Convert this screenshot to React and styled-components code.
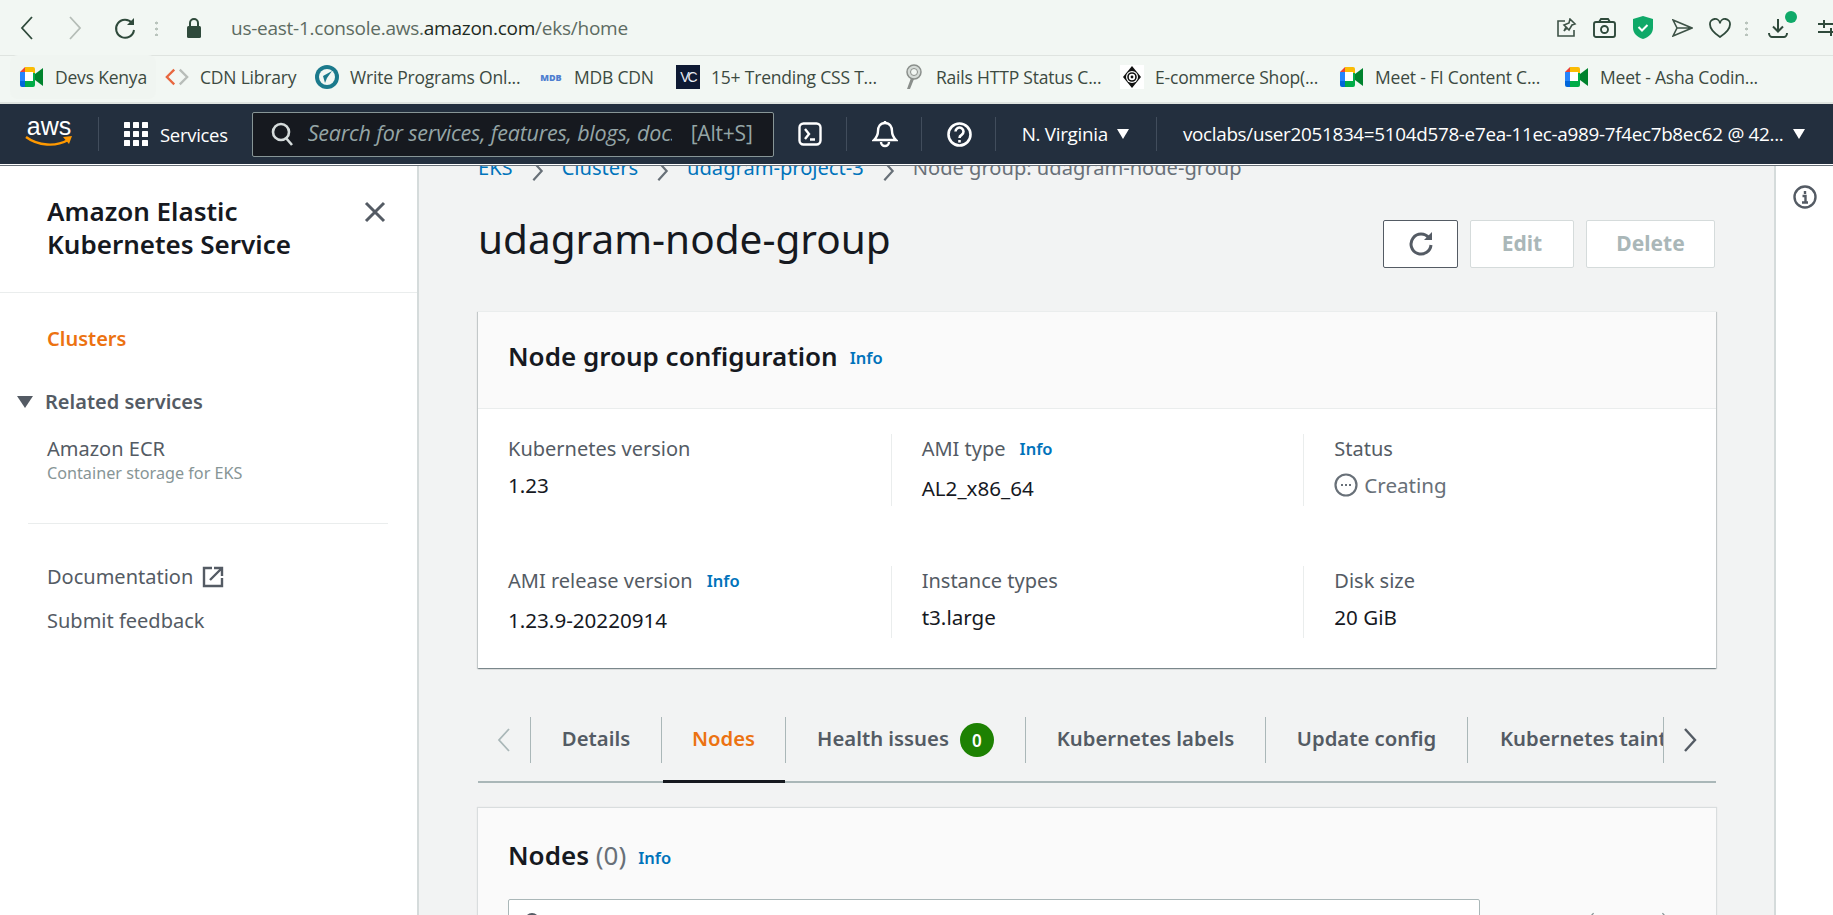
import React from 'react';
import styled, { createGlobalStyle } from 'styled-components';

const Global = createGlobalStyle`
  html, body { margin: 0; padding: 0; height: 100%; overflow: hidden; background: #fff; }
  * { box-sizing: border-box; }
  body { font-family: "Noto Sans", "Open Sans", Arial, sans-serif; }
`;

const Page = styled.div`
  width: 1833px; height: 915px; overflow: hidden; display: flex; flex-direction: column;
`;

/* browser chrome */
const AddressBar = styled.div`
  height: 56px; background: #f2f7f3; border-bottom: 1px solid #dfe4e0;
  display: flex; align-items: center; position: relative; padding-left: 15px; flex: none; overflow: hidden;
`;
const ChromeBtn = styled.span`
  display: inline-flex; align-items: center; justify-content: ${p => p.$start ? 'flex-start' : 'center'}; width: ${p => p.$w || 24}px;
  margin-left: ${p => p.$ml || 0}px; color: ${p => p.$c || '#2f4a3b'}; flex: none; position: relative;
`;
const Url = styled.div`
  font-family: "Open Sans", sans-serif; font-size: 19px; margin-left: 25px; color: #5d6b62; white-space: nowrap; letter-spacing: -.25px;
  b { font-weight: 400; color: #1d2a22; }
`;
const Spacer = styled.div` flex: 1; `;
const Dot3 = styled.span`
  width: 3px; height: 16px; margin-left: ${p => p.$ml}px; flex: none;
  background: radial-gradient(circle, #b9c4bc 1.4px, transparent 1.6px) 0 0 / 3px 6px;
`;
const GreenDot = styled.span`
  position: absolute; width: 12px; height: 12px; border-radius: 50%; background: #0fa968; top: -7px; right: -7px;
`;
const Bookmarks = styled.div`
  height: 48px; background: #f2f7f3; border-bottom: 2px solid #dfe4e0; display: flex; align-items: center; flex: none; padding: 0 0 4px 20px;
`;
const Bookmark = styled.div`
  width: ${p => p.$w}px; flex: none; display: flex; align-items: center; gap: 11px; position: relative;
  font-family: "Open Sans", sans-serif; font-size: 17.5px; color: #3c4a41; white-space: nowrap; letter-spacing: -.2px;
  ${p => p.$hover && `&::before { content: ""; position: absolute; left: -10px; top: -10px; bottom: -10px; width: 146px; background: #f0f5f1; border-radius: 8px; z-index: 0; }
  & > * { position: relative; }`}
`;
const BookmarkText = styled.span` position: relative; `;
const FavSlot = styled.span`
  width: 24px; height: 24px; flex: none; display: inline-flex; align-items: center; justify-content: center;
`;
const MdbText = styled.span` font-size: 9px; font-weight: 800; color: #4f7fd0; letter-spacing: 0; `;
const VcBox = styled.span`
  width: 24px; height: 24px; background: #0e1a33; color: #e8edf5; font-size: 14px; display: flex; align-items: center; justify-content: center; letter-spacing: -2px; font-family: "Liberation Sans", sans-serif;
`;

/* AWS nav */
const Nav = styled.div`
  height: 60px; background: #232f3e; display: flex; align-items: center; flex: none; color: #fff; position: relative;
`;
const NavLine = styled.div` height: 2px; flex: none; background: linear-gradient(#fff 0 1px, #687078 1px); `;
const AwsLogo = styled.div`
  width: 48px; margin-left: 25px; flex: none; display: flex; flex-direction: column; align-items: center; line-height: 1;
  span { font-family: "Liberation Sans", sans-serif; font-size: 25px; font-weight: 400; height: 18px; line-height: 18px; margin-top: -5px; letter-spacing: 0; }
`;
const NavDiv = styled.span`
  width: 1px; height: 34px; background: #414d5c; flex: none; margin-left: ${p => p.$ml}px;
`;
const NavIcon = styled.span` display: inline-flex; flex: none; margin-left: ${p => p.$ml}px; `;
const NavText = styled.span`
  font-size: ${p => p.$s || 18.85}px; color: #fff; margin-left: ${p => p.$ml || 0}px; white-space: nowrap; flex: none;
  font-family: "Open Sans", sans-serif; letter-spacing: -.3px;
`;
const SearchBox = styled.div`
  width: 522px; height: 45px; margin-left: 24px; background: #16191f; border: 1px solid #879596; border-radius: 2px;
  display: flex; align-items: center; padding-left: 18px; flex: none;
`;
const SearchText = styled.span`
  font-family: "Open Sans", sans-serif; font-style: italic; font-size: 21.5px; line-height: 26px; margin-top: -2px; color: #95a5a6; margin-left: 14px; width: 364px; overflow: hidden; white-space: nowrap; flex: none; letter-spacing: -.2px;
`;
const Kbd = styled.span`
  font-family: "Open Sans", sans-serif; font-size: 21px; margin-top: -2px; color: #95a5a6; margin-left: 19px; white-space: nowrap; letter-spacing: -.2px;
`;
const Caret = styled.span`
  width: 0; height: 0; border-left: 6px solid transparent; border-right: 6px solid transparent; border-top: 10px solid #fff;
  margin-left: ${p => p.$ml}px; flex: none;
`;

/* app body */
const Body = styled.div` flex: 1; min-height: 0; display: flex; `;
const Sidebar = styled.aside`
  width: 419px; flex: none; background: #fff; border-right: 2px solid #d5dbdb; position: relative; color: #545b64;
`;
const SideHead = styled.div`
  height: 127px; padding: 29px 0 0 47px; border-bottom: 1px solid #eaeded;
  color: #16191f; font-size: 26px; font-weight: 600; line-height: 33px;
`;
const CloseBtn = styled.span`
  position: absolute; left: 364px; top: 35px; color: #545b64; display: flex;
`;
const SideLink = styled.div`
  margin-left: 47px; font-size: 20px; line-height: 26px; margin-top: ${p => p.$mt || 0}px;
  font-weight: ${p => p.$w || 400}; color: ${p => p.$c || '#545b64'}; display: flex; align-items: center; gap: 9px;
`;
const SideSection = styled.div`
  margin: 37px 0 0 17px; display: flex; align-items: center; gap: 12px; font-size: 20px; font-weight: 600; color: #545b64; line-height: 26px;
`;
const Tri = styled.span`
  width: 0; height: 0; border-left: 8px solid transparent; border-right: 8px solid transparent; border-top: 12px solid #545b64;
`;
const SideSmall = styled.div` margin: 0 0 0 47px; font-size: 16.2px; line-height: 22px; color: #879596; `;
const SideDivider = styled.div` margin: 39px 29px 0 28px; height: 1px; background: #eaeded; `;

const Main = styled.main`
  flex: 1; min-width: 0; background: #f2f3f3; padding: 0 58px 0 59px; overflow: hidden;
`;
const Crumbs = styled.div`
  margin-top: -11px; height: 24px; display: flex; align-items: center; font-size: 20.1px; color: #0073bb; white-space: nowrap;
`;
const CrumbSep = styled.span` display: inline-flex; margin: 8px 18px 0; color: #687078; `;
const CrumbLast = styled.span` color: #687078; `;
const TitleRow = styled.div`
  margin-top: 41px; height: 48px; display: flex; align-items: center; justify-content: space-between;
`;
const H1 = styled.h1` margin: -11px 0 0; font-size: 40.5px; font-weight: 400; color: #16191f; `;
const Actions = styled.div` display: flex; gap: 12px; margin-right: 1px; `;
const Btn = styled.div`
  width: ${p => p.$w}px; height: 48px; padding-bottom: 2px; border-radius: 2px; background: #fff; display: flex; align-items: center; justify-content: center;
  border: 1px solid ${p => p.$on ? '#545b64' : '#d5dbdb'}; color: ${p => p.$on ? '#545b64' : '#aab7b8'}; font-size: 21px; font-weight: 700;
`;
const Card = styled.section`
  margin-top: 43px; background: #fff; box-shadow: 0 1px 1px 0 rgba(0,28,36,.3), 1px 1px 1px 0 rgba(0,28,36,.15), -1px 1px 1px 0 rgba(0,28,36,.15);
  border-top: 1px solid #eaeded;
`;
const CardHead = styled.div`
  height: 97px; padding: 0 0 9px 30px; border-bottom: 1px solid #eaeded; display: flex; align-items: center; gap: 12px; background: #fafafa;
`;
const H2 = styled.h2` margin: 0; font-size: 26px; font-weight: 600; color: #16191f; `;
const Info = styled.a` font-size: 16.5px; font-weight: 600; color: #0073bb; margin-top: ${p => p.$mt || 0}px; `;
const Grid = styled.div`
  display: grid; grid-template-columns: repeat(3, 1fr); row-gap: 60px; padding: 25px 0 30px;
`;
const Cell = styled.div`
  height: 72px; padding: 3px 0 0 30px; border-left: ${p => p.$first ? '0' : '1px solid #eaeded'};
`;
const Label = styled.div` font-size: 20px; line-height: 24px; color: #545b64; display: flex; align-items: center; gap: 14px; `;
const Value = styled.div` font-size: 20.6px; line-height: 24px; color: #16191f; margin-top: ${p => p.$mt}px; display: flex; align-items: center; gap: 6px; `;
const Status = styled(Value)` color: #687078; `;

const Tabs = styled.div`
  margin-top: 49px; height: 66px; display: flex; border-bottom: 2px solid #aab7b8; position: relative;
`;
const TabArrow = styled.div`
  width: ${p => p.$w}px; height: 46px; flex: none; display: flex; align-items: center; justify-content: center; color: ${p => p.$c};
`;
const Tab = styled.div`
  width: ${p => p.$w}px; height: 66px; flex: none; position: relative;
  ${p => p.$active && '&::after { content: ""; position: absolute; left: 2px; right: 0; bottom: 0; height: 3px; background: #16191f; }'}
`;
const TabLabel = styled.div`
  height: 46px; padding-bottom: 4px; border-left: 1px solid #aab7b8; border-right: ${p => p.$end ? '1px solid #aab7b8' : '0'};
  display: flex; align-items: center; justify-content: ${p => p.$left ? 'flex-start' : 'center'}; gap: 11px; padding-left: ${p => p.$left ? '32px' : '0'};
  font-size: 20.3px; font-weight: 600; color: ${p => p.$active ? '#ec7211' : '#545b64'}; white-space: nowrap; overflow: hidden;
`;
const Badge = styled.span`
  width: 34px; height: 34px; margin-top: 4px; border-radius: 50%; background: #1d8102; color: #fff; font-size: 17px; font-weight: 600; display: flex; align-items: center; justify-content: center; flex: none;
`;
const NodesCard = styled.section`
  margin-top: 25px; height: 200px; background: #fafafa; padding: 32px 0 0 30px; position: relative;
  box-shadow: 0 0 1px 1px rgba(0,28,36,.1);
`;
const NodesHead = styled.div` display: flex; align-items: center; gap: 12px; height: 30px; `;
const Count = styled.span` font-weight: 400; color: #687078; `;
const SearchRow = styled.div` display: flex; margin-top: 29px; align-items: flex-start; `;
const Input = styled.div`
  width: 972px; height: 40px; background: #fff; border: 1px solid #aab7b8; border-radius: 2px; padding: 12px 0 0 15px; flex: none;
  display: flex; align-items: flex-start; gap: 10px; font-style: italic; font-size: 17px; line-height: 18px; color: #879596;
`;
const Pager = styled.div`
  margin-left: 105px; margin-top: 13px; display: flex; gap: 28px; align-items: flex-start; color: #879596; font-size: 17px; line-height: 20px;
`;
const Rail = styled.aside`
  width: 59px; flex: none; background: #fff; border-left: 2px solid #d5dbdb; display: flex; justify-content: center; padding-top: 19px; color: #545b64;
`;

/* drawings */
const Chev = ({ dir = 'l', w = 14, h = 24, c = 'currentColor', sw = 1.8 }) => (
  <svg width={w} height={h} viewBox="0 0 14 24" fill="none" stroke={c} strokeWidth={sw}>
    <path d={dir === 'l' ? 'M12 1 2 12l10 11' : 'M2 1l10 11L2 23'} />
  </svg>
);
const Meet = () => (
  <svg width="24" height="20" viewBox="0 0 24 20">
    <path d="M0 5 5 0v5z" fill="#ea4335" /><path d="M5 0h8a2 2 0 0 1 2 2v4H5z" fill="#fbbc04" />
    <path d="M0 5h5v9H0z" fill="#2684fc" /><path d="M0 14h5v6H2a2 2 0 0 1-2-2z" fill="#0066da" />
    <path d="M5 14h10v4a2 2 0 0 1-2 2H5z" fill="#00ac47" /><rect x="5" y="5" width="8" height="9" fill="#fff" />
    <path d="M13 6h2v8h-2z" fill="#00ac47" /><path d="M15 7l8-6v18l-8-6z" fill="#00832d" />
  </svg>
);
const Cdn = () => (
  <svg width="26" height="20" viewBox="0 0 26 20" fill="none" strokeWidth="2.5">
    <path d="M10 2 2 10l8 8" stroke="#e8673f" /><path d="M16 2l8 8-8 8" stroke="#b8bdb9" />
  </svg>
);
const Wp = () => (
  <svg width="24" height="24" viewBox="0 0 24 24">
    <circle cx="12" cy="12" r="12" fill="#1b7a8c" /><circle cx="12" cy="12" r="8" fill="#f2f7f3" />
    <path d="M17 6 8 11l2 7 2-5z" fill="#1b7a8c" />
  </svg>
);
const RailsPin = () => (
  <svg width="20" height="26" viewBox="0 0 20 26">
    <circle cx="11" cy="8" r="7" fill="#d5dbd7" stroke="#8a8f8b" strokeWidth="1.5" />
    <circle cx="11" cy="8" r="3.5" fill="#f2f7f3" stroke="#8a8f8b" />
    <path d="M8 14 4 25l3 0 4-10z" fill="#8a8f8b" />
  </svg>
);
const Ecom = () => (
  <svg width="24" height="24" viewBox="0 0 24 24">
    <rect width="24" height="24" fill="#fff" />
    <path d="M12 1 21 12 12 23 3 12z" fill="#111" /><circle cx="12" cy="12" r="6" fill="#fff" />
    <circle cx="12" cy="12" r="4" fill="none" stroke="#111" strokeWidth="1.6" /><circle cx="12" cy="12" r="1.4" fill="#111" />
  </svg>
);
const Services9 = () => (
  <svg width="24" height="24" viewBox="0 0 24 24" fill="#fff">
    {[0, 9, 18].flatMap(y => [0, 9, 18].map(x => <rect key={x + '-' + y} x={x} y={y} width="6" height="6" rx=".6" />))}
  </svg>
);
const Refresh = ({ s = 26, sw = 3 }) => (
  <svg width={s} height={s} viewBox="0 0 26 26" fill="none" stroke="currentColor" strokeWidth={sw}>
    <path d="M21 8a10 10 0 1 0 2 7" /><path d="M24 2v8h-8z" fill="currentColor" stroke="none" />
  </svg>
);

const bookmarks = [
  [145, <Meet />, 'Devs Kenya', true], [150, <Cdn />, 'CDN Library'], [224, <Wp />, 'Write Programs Onl...'],
  [137, <MdbText>MDB</MdbText>, 'MDB CDN'], [225, <VcBox>VC</VcBox>, '15+ Trending CSS T...'],
  [219, <RailsPin />, 'Rails HTTP Status C...'], [220, <Ecom />, 'E-commerce Shop(...'],
  [225, <Meet />, 'Meet - FI Content C...'], [210, <Meet />, 'Meet - Asha Codin...'],
];

const cells = [
  ['Kubernetes version', false, '1.23', 12],
  ['AMI type', true, 'AL2_x86_64', 15],
  ['Status', false, 'Creating', 12, true],
  ['AMI release version', true, '1.23.9-20220914', 15],
  ['Instance types', false, 't3.large', 12],
  ['Disk size', false, '20 GiB', 12],
];

export default function App() {
  return (
    <Page>
      <Global />
      <AddressBar>
        <ChromeBtn><Chev /></ChromeBtn>
        <ChromeBtn $ml={24} $c="#b5bdb7"><Chev dir="r" /></ChromeBtn>
        <ChromeBtn $ml={26}>
          <svg width="24" height="24" viewBox="0 0 24 24" fill="none" stroke="currentColor" strokeWidth="2"><path d="M19 7a9 9 0 1 0 2 7" /><path d="M21 2v7h-7z" fill="currentColor" stroke="none" /></svg>
        </ChromeBtn>
        <Dot3 $ml={18} />
        <ChromeBtn $ml={24}>
          <svg width="18" height="22" viewBox="0 0 18 22" fill="#2f4a3b"><rect x="2" y="9" width="14" height="12" rx="1.5" /><path d="M5 9V6a4 4 0 0 1 8 0v3" fill="none" stroke="#2f4a3b" strokeWidth="2" /></svg>
        </ChromeBtn>
        <Url>us-east-1.console.aws.<b>amazon.com</b>/eks/home</Url>
        <Spacer />
        <ChromeBtn $c="#3e5347">
          <svg width="20" height="20" viewBox="0 0 20 20" fill="none" stroke="currentColor" strokeWidth="1.6"><path d="M8 3H1v15h16v-6" /><path d="M13 1l5 5-3 1-3 5-2-2-3 3 2-4-2-2 5-2z" /></svg>
        </ChromeBtn>
        <ChromeBtn $ml={13} $c="#2f4a3b">
          <svg width="23" height="20" viewBox="0 0 23 20" fill="none" stroke="currentColor" strokeWidth="1.9"><rect x="1" y="4" width="21" height="15" rx="2" /><path d="M6 4l2-3h7l2 3" /><circle cx="11.500" cy="11.500" r="3.500" /></svg>
        </ChromeBtn>
        <ChromeBtn $ml={15} $c="#0fa968">
          <svg width="20" height="23" viewBox="0 0 20 23"><path d="M10 0 20 3v9c0 5-4 9-10 11C4 21 0 17 0 12V3z" fill="#0fa968" /><path d="M5.500 11 9 14.500 14.500 9" fill="none" stroke="#fff" strokeWidth="2" /></svg>
        </ChromeBtn>
        <ChromeBtn $ml={15} $c="#3e5347">
          <svg width="21" height="18" viewBox="0 0 21 18" fill="none" stroke="currentColor" strokeWidth="1.6"><path d="M1 1l19 8-19 8 4-8zM5 9h15" /></svg>
        </ChromeBtn>
        <ChromeBtn $ml={14} $c="#2f4a3b">
          <svg width="22" height="20" viewBox="0 0 22 20" fill="none" stroke="currentColor" strokeWidth="1.8"><path d="M11 19C5 15 1 11 1 6.500a5 5 0 0 1 10-1 5 5 0 0 1 10 1C21 11 17 15 11 19z" /></svg>
        </ChromeBtn>
        <Dot3 $ml={13} />
        <ChromeBtn $ml={18} $c="#2f4a3b">
          <GreenDot />
          <svg width="20" height="20" viewBox="0 0 20 20" fill="none" stroke="currentColor" strokeWidth="2"><path d="M10 1v12M5 8.500l5 5 5-5M1 15c0 3 2 4 3 4h12c1 0 3-1 3-4" /></svg>
        </ChromeBtn>
        <ChromeBtn $ml={28} $w={15} $start $c="#2f4a3b">
          <svg width="22" height="16" viewBox="0 0 22 16" fill="none" stroke="currentColor" strokeWidth="2" style={{ flex: 'none' }}><path d="M0 4h22M0 12h22M6 0v8M13 8v8" /></svg>
        </ChromeBtn>
      </AddressBar>

      <Bookmarks>
        {bookmarks.map(([w, icon, text, hover], i) => (
          <Bookmark key={i} $w={w} $hover={hover}><FavSlot>{icon}</FavSlot><BookmarkText>{text}</BookmarkText></Bookmark>
        ))}
      </Bookmarks>

      <Nav>
        <AwsLogo>
          <span>aws</span>
          <svg width="48" height="12" viewBox="0 0 48 12" fill="none"><path d="M1 2c12 9 30 10 42 3" stroke="#f90" strokeWidth="2.400" /><path d="M38 2l9-1-3 8z" fill="#f90" /></svg>
        </AwsLogo>
        <NavDiv $ml={25} />
        <NavIcon $ml={25}><Services9 /></NavIcon>
        <NavText $ml={12} $s={18.5}>Services</NavText>
        <SearchBox>
          <svg width="23" height="24" viewBox="0 0 23 24" fill="none" stroke="#d5dbdb" strokeWidth="2.600"><circle cx="10" cy="10" r="8" /><path d="M15 16l6 7" /></svg>
          <SearchText>Search for services, features, blogs, docs, tutorials</SearchText>
          <Kbd>[Alt+S]</Kbd>
        </SearchBox>
        <NavIcon $ml={24}>
          <svg width="24" height="24" viewBox="0 0 24 24" fill="none" stroke="#fff" strokeWidth="2.400"><rect x="1.500" y="1.500" width="21" height="21" rx="4" /><path d="M7 7l4 5-4 5M12 17.500h5" /></svg>
        </NavIcon>
        <NavDiv $ml={24} />
        <NavIcon $ml={25}>
          <svg width="26" height="28" viewBox="0 0 26 28" fill="none" stroke="#fff" strokeWidth="2.400"><path d="M13 3c-5 0-7 4-7 8 0 4-2 7-4 9h22c-2-2-4-5-4-9 0-4-2-8-7-8zM13 1v2M9 22a4 4 0 0 0 8 0" /></svg>
        </NavIcon>
        <NavDiv $ml={23} />
        <NavIcon $ml={25}>
          <svg width="25" height="25" viewBox="0 0 25 25" fill="none" stroke="#fff" strokeWidth="2.600"><circle cx="12.500" cy="12.500" r="11" /><path d="M8.500 9.500a4 4 0 1 1 6 3.500c-1.500.8-2 1.500-2 3" /><path d="M12.500 18v2.500" /></svg>
        </NavIcon>
        <NavDiv $ml={23} />
        <NavText $ml={26}>N. Virginia</NavText>
        <Caret $ml={9} />
        <NavDiv $ml={27} />
        <NavText $ml={26}>voclabs/user2051834=5104d578-e7ea-11ec-a989-7f4ec7b8ec62 @ 42...</NavText>
        <Caret $ml={9} />
      </Nav>
      <NavLine />

      <Body>
        <Sidebar>
          <SideHead>Amazon Elastic<br />Kubernetes Service</SideHead>
          <CloseBtn>
            <svg width="22" height="22" viewBox="0 0 22 22" stroke="currentColor" strokeWidth="3"><path d="M2 2l18 18M20 2 2 20" /></svg>
          </CloseBtn>
          <SideLink $mt={33} $w={600} $c="#ec7211">Clusters</SideLink>
          <SideSection><Tri />Related services</SideSection>
          <SideLink $mt={21}>Amazon ECR</SideLink>
          <SideSmall>Container storage for EKS</SideSmall>
          <SideDivider />
          <SideLink $mt={40}>Documentation
            <svg width="22" height="22" viewBox="0 0 22 22" fill="none" stroke="currentColor" strokeWidth="2.400"><path d="M10 2H2v18h18v-8" /><path d="M8 14 20 2M12 2h8v8" /></svg>
          </SideLink>
          <SideLink $mt={18}>Submit feedback</SideLink>
        </Sidebar>

        <Main>
          <Crumbs>
            EKS<CrumbSep><Chev dir="r" w={13} h={20} sw={2.6} /></CrumbSep>Clusters<CrumbSep><Chev dir="r" w={13} h={20} sw={2.6} /></CrumbSep>udagram-project-3<CrumbSep><Chev dir="r" w={13} h={20} sw={2.6} /></CrumbSep><CrumbLast>Node group: udagram-node-group</CrumbLast>
          </Crumbs>
          <TitleRow>
            <H1>udagram-node-group</H1>
            <Actions>
              <Btn $w={75} $on><Refresh /></Btn>
              <Btn $w={104}>Edit</Btn>
              <Btn $w={129}>Delete</Btn>
            </Actions>
          </TitleRow>

          <Card>
            <CardHead><H2>Node group configuration</H2><Info $mt={4}>Info</Info></CardHead>
            <Grid>
              {cells.map(([label, info, value, mt, status], i) => (
                <Cell key={label} $first={i % 3 === 0}>
                  <Label>{label}{info && <Info>Info</Info>}</Label>
                  {status ? (
                    <Status $mt={mt}>
                      <svg width="24" height="24" viewBox="0 0 24 24" fill="none" stroke="#687078" strokeWidth="2.200"><circle cx="12" cy="12" r="10.500" /><path d="M7 12h2M11 12h2M15 12h2" /></svg>
                      {value}
                    </Status>
                  ) : <Value $mt={mt}>{value}</Value>}
                </Cell>
              ))}
            </Grid>
          </Card>

          <Tabs>
            <TabArrow $w={52} $c="#aab7b8"><Chev /></TabArrow>
            <Tab $w={131}><TabLabel>Details</TabLabel></Tab>
            <Tab $w={124} $active><TabLabel $active>Nodes</TabLabel></Tab>
            <Tab $w={240}><TabLabel>Health issues<Badge>0</Badge></TabLabel></Tab>
            <Tab $w={240}><TabLabel>Kubernetes labels</TabLabel></Tab>
            <Tab $w={202}><TabLabel>Update config</TabLabel></Tab>
            <Tab $w={197}><TabLabel $left $end>Kubernetes taints</TabLabel></Tab>
            <TabArrow $w={52} $c="#545b64"><Chev dir="r" sw={2.4} /></TabArrow>
          </Tabs>

          <NodesCard>
            <NodesHead><H2>Nodes <Count>(0)</Count></H2><Info $mt={4}>Info</Info></NodesHead>
            <SearchRow>
              <Input>
                <svg width="18" height="18" viewBox="0 0 18 18" fill="none" stroke="#545b64" strokeWidth="2.200" style={{ flex: 'none' }}><circle cx="8" cy="8" r="6" /><path d="M12 12l5 5" /></svg>
                Filter nodes by property or value
              </Input>
              <Pager><Chev w={10} h={18} /><span>1</span><Chev dir="r" w={10} h={18} /></Pager>
            </SearchRow>
          </NodesCard>
        </Main>

        <Rail>
          <svg width="24" height="24" viewBox="0 0 24 24" fill="none" stroke="currentColor" strokeWidth="2.400"><circle cx="12" cy="12" r="10.500" /><path d="M12 6v3M9.500 11H12.500V17M9 17.500h6" /></svg>
        </Rail>
      </Body>
    </Page>
  );
}
